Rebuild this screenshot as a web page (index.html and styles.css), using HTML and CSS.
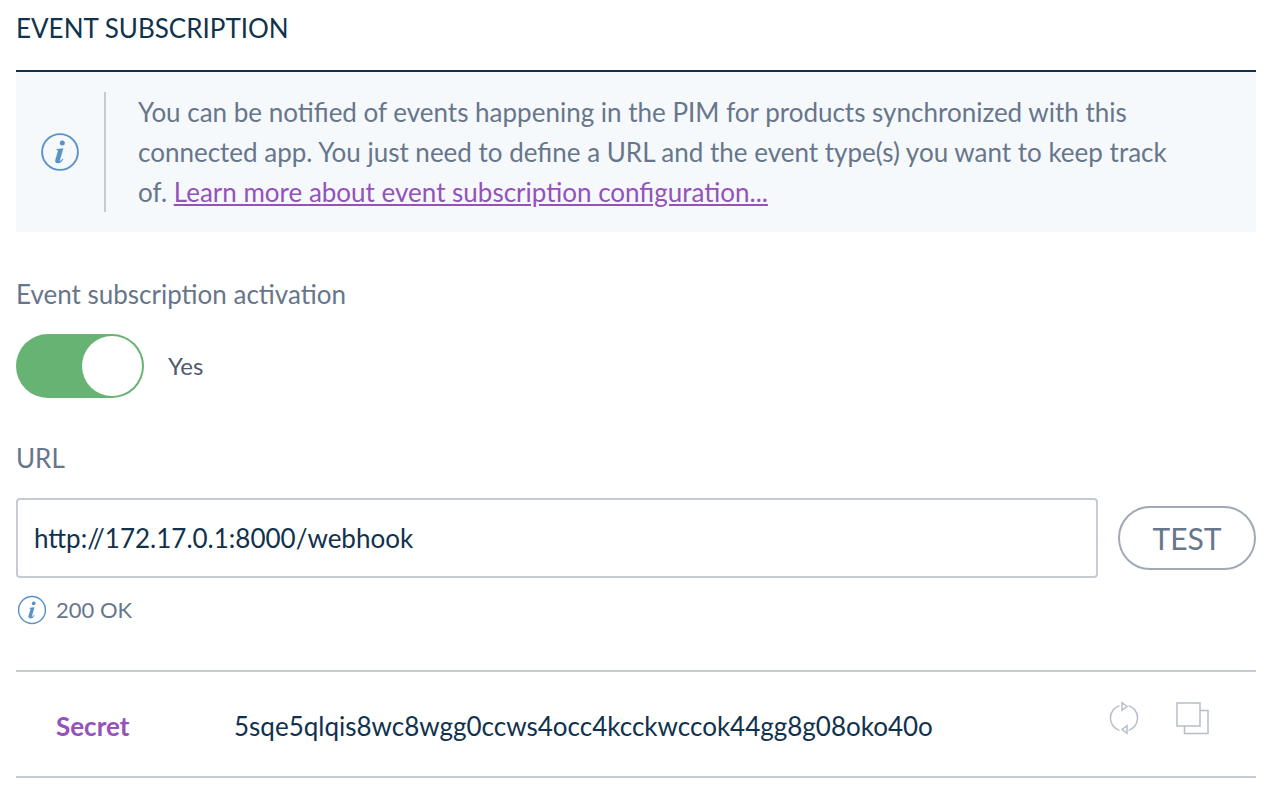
FILE: index.html
```html
<!DOCTYPE html>
<html lang="en">
<head>
<meta charset="utf-8">
<meta name="viewport" content="width=device-width, initial-scale=1">
<title>Event subscription</title>
<link rel="stylesheet" href="styles.css">
</head>
<body>
<svg class="sprite" aria-hidden="true">
  <symbol id="icon-info" viewBox="0 0 40 40">
    <circle cx="20" cy="20" r="17.9" fill="none" stroke="currentColor" stroke-width="1.9"/>
    <circle cx="22.3" cy="11" r="2.5" fill="currentColor"/>
    <path fill="currentColor" stroke="currentColor" stroke-width="0.3" d="M16.8 17.2 23.2 16.4 19.8 28.2C19.5 29.3 20.2 29.4 20.9 28.8 21.6 28.2 22.1 27.5 22.6 26.8L23.2 27.2C21.7 29.7 20 31.1 17.9 31.1 15.7 31.1 14.9 29.8 15.5 27.7L17.9 19.6C18.3 18.3 17.9 18 16.6 18Z"/>
  </symbol>
</svg>
<main class="page">
  <h2 class="section-title">Event subscription</h2>
  <div class="notice">
    <svg class="notice-icon" aria-hidden="true"><use href="#icon-info"/></svg>
    <p class="notice-text">You can be notified of events happening in the PIM for products synchronized with this connected app. You just need to define a URL and the event type(s) you want to keep track of. <a class="link" href="#">Learn more about event subscription configuration...</a></p>
  </div>
  <form class="form">
    <div class="field">
      <label class="label" for="enabled">Event subscription activation</label>
      <div class="switch-row">
        <input class="switch" id="enabled" type="checkbox" role="switch" checked>
        <span class="switch-value">Yes</span>
      </div>
    </div>
    <div class="field">
      <label class="label" for="url">URL</label>
      <div class="url-row">
        <input class="text-input" id="url" type="text" value="http://172.17.0.1:8000/webhook" spellcheck="false">
        <button class="test-button" type="button">TEST</button>
      </div>
      <p class="helper">
        <svg class="helper-icon" aria-hidden="true"><use href="#icon-info"/></svg>
        200 OK
      </p>
    </div>
  </form>
  <table class="credentials">
    <tr>
      <th class="credential-name" scope="row">Secret</th>
      <td class="credential-value">5sqe5qlqis8wc8wgg0ccws4occ4kcckwccok44gg8g08oko40o</td>
      <td class="credential-actions">
        <div class="actions">
          <button class="icon-button" type="button" aria-label="Regenerate">
            <svg class="action-icon" viewBox="0 0 36 36" aria-hidden="true">
              <path d="M13.5 5.6A13 13 0 0 0 13.5 30.4M22.5 5.6A13 13 0 0 1 22.5 30.4M16 2.7V10.3L21 6.5ZM21 25.7V33.3L16 29.5Z"/>
            </svg>
          </button>
          <button class="icon-button" type="button" aria-label="Copy">
            <svg class="action-icon" viewBox="0 0 36 36" aria-hidden="true">
              <path d="M3 3H26V26H3ZM26 10.5H34V33.5H10.5V26"/>
            </svg>
          </button>
        </div>
      </td>
    </tr>
  </table>
</main>
</body>
</html>
```
FILE: styles.css
```css
* {
  box-sizing: border-box;
}

body {
  margin: 0;
  background: #fff;
  color: #67768a;
  font-family: Lato, "Liberation Sans", sans-serif;
  font-size: 26px;
  line-height: 40px;
}

.sprite {
  display: block;
  width: 0;
  height: 0;
}

.page {
  padding: 8px 20px 20px 16px;
}

.section-title {
  margin: 0;
  padding-bottom: 22px;
  border-bottom: 2px solid #11324d;
  color: #11324d;
  font-size: 26px;
  font-weight: 400;
  text-transform: uppercase;
}

.notice {
  display: flex;
  align-items: center;
  gap: 24px;
  padding: 20px 64px 20px 24px;
  background: #f5f9fc;
}

.notice-icon {
  flex: none;
  width: 40px;
  height: 40px;
  color: #5992c7;
}

.notice-text {
  flex: 1;
  margin: 0;
  padding-left: 32px;
  border-left: 2px solid #c7cbd4;
}

.link {
  color: #9452ba;
}

.form {
  display: grid;
  gap: 40px;
  padding: 42px 0 40px;
}

.label {
  display: block;
}

.switch-row {
  display: flex;
  align-items: center;
  gap: 24px;
  margin-top: 20px;
}

.switch {
  appearance: none;
  display: flex;
  width: 128px;
  height: 64px;
  margin: 0;
  padding: 2px;
  border-radius: 32px;
  background: #67b373;
}

.switch::before {
  content: "";
  width: 60px;
  height: 60px;
  border-radius: 50%;
  background: #fff;
}

.switch:checked {
  justify-content: flex-end;
}

.switch-value {
  color: #515b6e;
  font-size: 24px;
}

.url-row {
  display: flex;
  align-items: center;
  gap: 20px;
  margin-top: 20px;
}

.text-input {
  flex: 1;
  min-width: 0;
  height: 80px;
  padding: 0 16px;
  border: 2px solid #c7cbd4;
  border-radius: 4px;
  background: #fff;
  color: #11324d;
  font: inherit;
}

.test-button {
  width: 138px;
  height: 64px;
  padding: 0;
  border: 2px solid #a1a9b7;
  border-radius: 32px;
  background: #fff;
  color: #67768a;
  font: inherit;
  font-size: 30px;
}

.helper {
  display: flex;
  align-items: center;
  gap: 8px;
  margin: 12px 0 0;
  font-size: 22px;
}

.helper-icon {
  width: 32px;
  height: 32px;
  padding: 1px;
  color: #5992c7;
}

.credentials {
  width: 100%;
  border-collapse: collapse;
  border-top: 2px solid #c7cbd4;
  border-bottom: 2px solid #c7cbd4;
}

.credentials th,
.credentials td {
  height: 106px;
  padding: 4px 0 0;
  text-align: left;
}

.credentials .credential-name {
  width: 218px;
  padding-left: 40px;
  color: #9452ba;
  font-weight: 700;
}

.credential-value {
  color: #11324d;
}

.credentials .credential-actions {
  padding: 28px 46px 0 0;
  vertical-align: top;
}

.actions {
  display: flex;
  justify-content: flex-end;
  gap: 32px;
}

.icon-button {
  display: flex;
  padding: 0;
  border: 0;
  background: none;
  color: #b6bdc9;
}

.action-icon {
  width: 36px;
  height: 36px;
  fill: none;
  stroke: currentColor;
  stroke-width: 1.5;
}
```
